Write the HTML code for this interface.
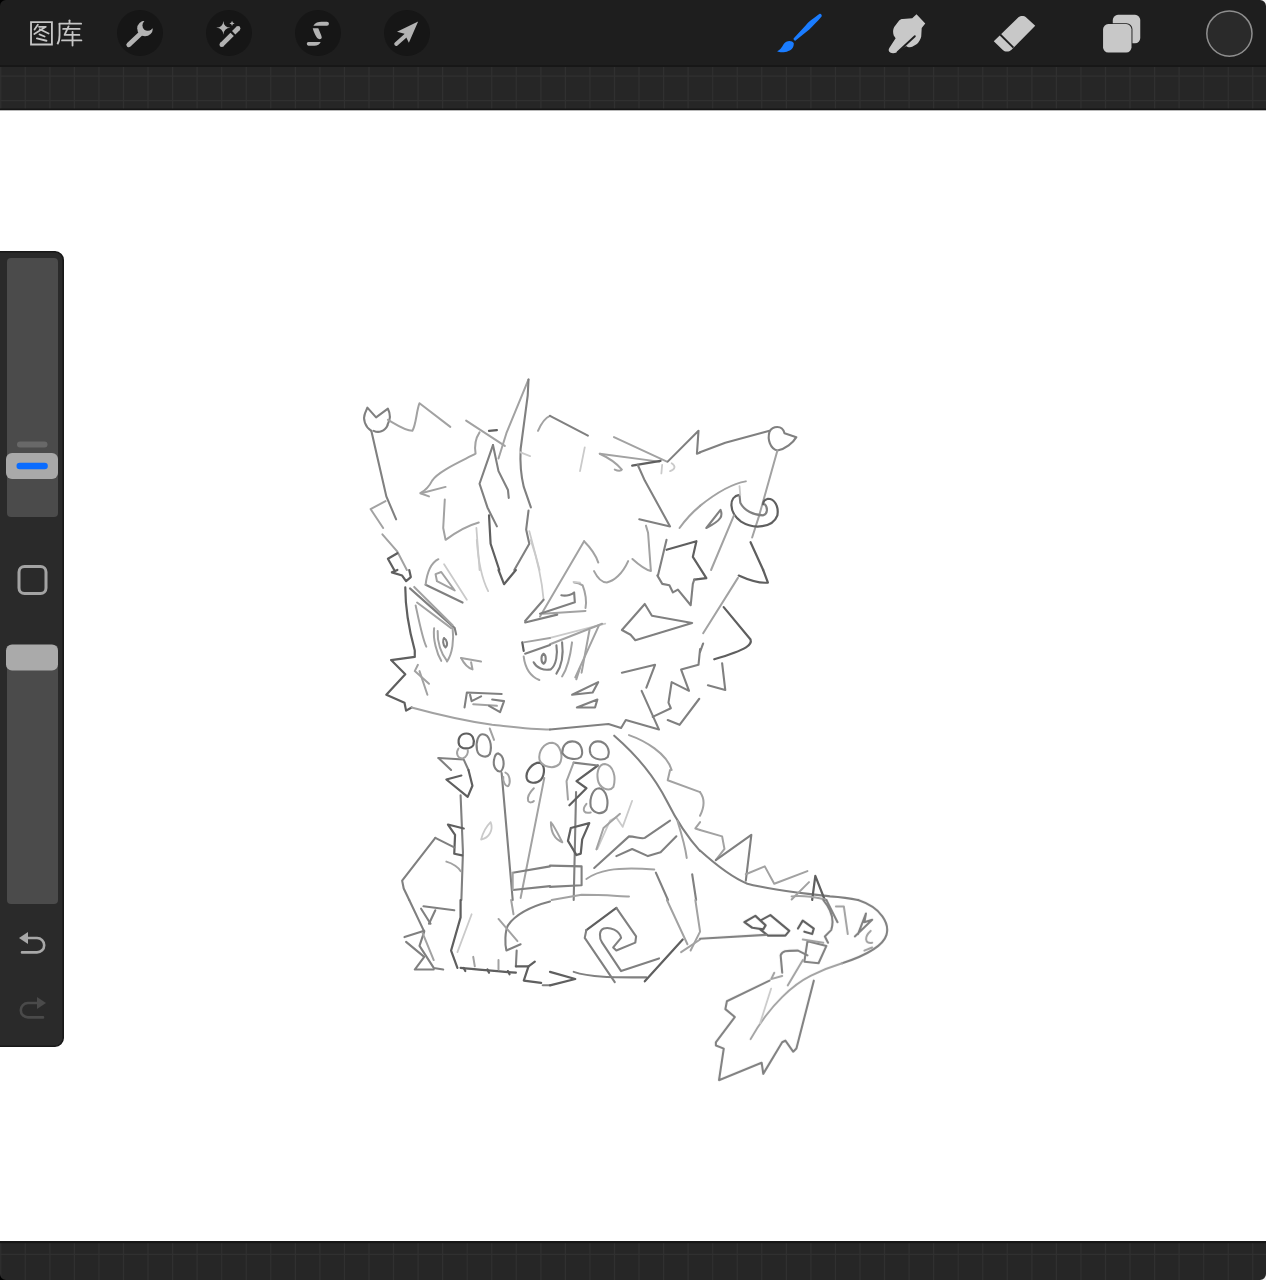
<!DOCTYPE html>
<html><head><meta charset="utf-8"><title>Procreate</title>
<style>
html,body{margin:0;padding:0;width:1266px;height:1280px;overflow:hidden;background:#ffffff;font-family:"Liberation Sans",sans-serif;}
svg{position:absolute;left:0;top:0;display:block;}
</style></head><body>
<svg width="1266" height="1280" viewBox="0 0 1266 1280">
<rect width="1266" height="1280" fill="#ffffff"/>
<filter id="soft" x="-5%" y="-5%" width="110%" height="110%"><feGaussianBlur stdDeviation="0.7"/></filter>
<g fill="none" stroke-linecap="round" stroke-linejoin="round" filter="url(#soft)">
<g transform="translate(350,370) scale(0.157978)">
<path d="M135,385 C95,360 80,310 95,275 L110,238 L165,300 L240,245 C258,280 252,320 238,345" stroke="#808080" stroke-width="2.1" vector-effect="non-scaling-stroke"/>
<path d="M150,385 C180,400 220,390 238,350" stroke="#808080" stroke-width="2.1" vector-effect="non-scaling-stroke"/>
<path d="M135,385 L175,560 L230,800 L292,945" stroke="#808080" stroke-width="2.1" vector-effect="non-scaling-stroke"/>
<path d="M240,315 C300,350 350,385 395,385 C420,340 420,260 440,210 L635,360" stroke="#a2a2a2" stroke-width="2.0" vector-effect="non-scaling-stroke"/>
<path d="M735,320 L980,480" stroke="#a2a2a2" stroke-width="2.0" vector-effect="non-scaling-stroke"/>
<path d="M880,385 L930,380" stroke="#5e5e5e" stroke-width="2.2" vector-effect="non-scaling-stroke"/>
<path d="M820,395 C790,440 790,500 795,530 C700,580 560,640 520,700 C500,740 480,760 445,780 L500,800" stroke="#a2a2a2" stroke-width="2.0" vector-effect="non-scaling-stroke"/>
<path d="M450,780 L605,740" stroke="#a2a2a2" stroke-width="2.0" vector-effect="non-scaling-stroke"/>
<path d="M1130,60 L990,400 L940,560" stroke="#a2a2a2" stroke-width="2.0" vector-effect="non-scaling-stroke"/>
<path d="M1130,60 L1125,160 L1080,500 C1075,600 1090,700 1100,740 L1145,870" stroke="#808080" stroke-width="2.1" vector-effect="non-scaling-stroke"/>
<path d="M1190,385 C1210,340 1240,300 1266,290" stroke="#a2a2a2" stroke-width="2.0" vector-effect="non-scaling-stroke"/>
<path d="M905,475 L820,720 L870,870 L930,990" stroke="#808080" stroke-width="2.1" vector-effect="non-scaling-stroke"/>
<path d="M905,475 L940,640 L1000,760 L1005,810" stroke="#808080" stroke-width="2.1" vector-effect="non-scaling-stroke"/>
<path d="M880,920 L890,1100 L945,1266" stroke="#5e5e5e" stroke-width="2.2" vector-effect="non-scaling-stroke"/>
<path d="M1130,890 L1115,1010 L1135,1100 L1040,1266" stroke="#808080" stroke-width="2.1" vector-effect="non-scaling-stroke"/>
<path d="M1075,520 L1140,545" stroke="#cacaca" stroke-width="1.8" vector-effect="non-scaling-stroke"/>
<path d="M600,820 L590,1000 L605,1075 C680,1020 760,980 815,965" stroke="#a2a2a2" stroke-width="2.0" vector-effect="non-scaling-stroke"/>
<path d="M800,1000 L820,1266" stroke="#cacaca" stroke-width="1.8" vector-effect="non-scaling-stroke"/>
<path d="M225,830 L130,880 L210,1000" stroke="#a2a2a2" stroke-width="2.0" vector-effect="non-scaling-stroke"/>
<path d="M205,1040 L300,1150 L360,1266" stroke="#a2a2a2" stroke-width="2.0" vector-effect="non-scaling-stroke"/>
<path d="M300,1160 L240,1195 L280,1266" stroke="#5e5e5e" stroke-width="2.2" vector-effect="non-scaling-stroke"/>
<path d="M1135,1020 L1200,1266" stroke="#cacaca" stroke-width="1.8" vector-effect="non-scaling-stroke"/>
</g>
<g transform="translate(550,370) scale(0.157978)">
<path d="M0,290 L240,415" stroke="#808080" stroke-width="2.1" vector-effect="non-scaling-stroke"/>
<path d="M405,425 L740,580" stroke="#a2a2a2" stroke-width="2.0" vector-effect="non-scaling-stroke"/>
<path d="M315,530 C380,560 430,600 455,630 C450,640 430,640 410,630" stroke="#a2a2a2" stroke-width="2.0" vector-effect="non-scaling-stroke"/>
<path d="M315,530 L690,580" stroke="#a2a2a2" stroke-width="2.0" vector-effect="non-scaling-stroke"/>
<path d="M520,605 L700,575" stroke="#5e5e5e" stroke-width="2.2" vector-effect="non-scaling-stroke"/>
<path d="M555,600 L600,700 L760,990 L565,945" stroke="#808080" stroke-width="2.1" vector-effect="non-scaling-stroke"/>
<path d="M745,580 L940,385 L930,530 L950,522" stroke="#808080" stroke-width="2.1" vector-effect="non-scaling-stroke"/>
<path d="M710,600 L705,655" stroke="#cacaca" stroke-width="1.8" vector-effect="non-scaling-stroke"/>
<path d="M770,590 C800,610 790,630 760,640" stroke="#cacaca" stroke-width="1.8" vector-effect="non-scaling-stroke"/>
<path d="M220,490 L190,640" stroke="#cacaca" stroke-width="1.8" vector-effect="non-scaling-stroke"/>
<path d="M820,1000 C870,930 920,885 950,860" stroke="#a2a2a2" stroke-width="2.0" vector-effect="non-scaling-stroke"/>
</g>
<g transform="translate(700,370) scale(0.157978)">
<path d="M0,520 L160,460 L440,385" stroke="#808080" stroke-width="2.1" vector-effect="non-scaling-stroke"/>
<path d="M440,390 C460,355 520,345 535,400 L610,425 C590,460 540,500 490,510 C445,500 425,440 440,390" stroke="#808080" stroke-width="2.1" vector-effect="non-scaling-stroke"/>
<path d="M490,510 L375,920 L330,1060" stroke="#a2a2a2" stroke-width="2.0" vector-effect="non-scaling-stroke"/>
<path d="M250,790 C180,800 180,900 260,960 C340,1010 460,1000 490,920 C500,860 470,815 430,815 C410,820 400,835 400,850" stroke="#5e5e5e" stroke-width="2.2" vector-effect="non-scaling-stroke"/>
<path d="M250,790 L255,840 C280,890 340,920 400,920 C430,910 430,870 410,850" stroke="#808080" stroke-width="2.1" vector-effect="non-scaling-stroke"/>
<path d="M290,705 C200,720 100,780 0,860" stroke="#a2a2a2" stroke-width="2.0" vector-effect="non-scaling-stroke"/>
<path d="M40,1000 L130,885 C145,920 140,950 40,1000" stroke="#808080" stroke-width="2.1" vector-effect="non-scaling-stroke"/>
<path d="M215,920 L70,1266" stroke="#a2a2a2" stroke-width="2.0" vector-effect="non-scaling-stroke"/>
<path d="M320,1090 L400,1266" stroke="#5e5e5e" stroke-width="2.2" vector-effect="non-scaling-stroke"/>
<path d="M250,735 L255,790" stroke="#cacaca" stroke-width="1.8" vector-effect="non-scaling-stroke"/>
</g>
<g transform="translate(350,570) scale(0.157978)">
<path d="M300,0 L265,15 L330,35 L355,70 L385,45 L375,0" stroke="#5e5e5e" stroke-width="2.2" vector-effect="non-scaling-stroke"/>
<path d="M350,110 C350,250 380,400 410,510 L410,550 L260,570 L350,660 L230,790 L345,840 L355,890 L390,870" stroke="#5e5e5e" stroke-width="2.2" vector-effect="non-scaling-stroke"/>
<path d="M390,870 C500,900 700,950 900,980 C1000,990 1150,1010 1266,1010" stroke="#a2a2a2" stroke-width="2.0" vector-effect="non-scaling-stroke"/>
<path d="M940,0 L975,90 L1050,0" stroke="#5e5e5e" stroke-width="2.2" vector-effect="non-scaling-stroke"/>
<path d="M960,785 L740,775 L725,870" stroke="#808080" stroke-width="2.1" vector-effect="non-scaling-stroke"/>
<path d="M760,790 L770,830 L830,800" stroke="#808080" stroke-width="2.1" vector-effect="non-scaling-stroke"/>
<path d="M780,850 L930,860" stroke="#a2a2a2" stroke-width="2.0" vector-effect="non-scaling-stroke"/>
<path d="M900,820 L975,830 L950,900 L880,860" stroke="#808080" stroke-width="2.1" vector-effect="non-scaling-stroke"/>
<path d="M560,1190 L720,1200 L750,1266" stroke="#808080" stroke-width="2.1" vector-effect="non-scaling-stroke"/>
<path d="M560,1190 L640,1266" stroke="#808080" stroke-width="2.1" vector-effect="non-scaling-stroke"/>
<path d="M430,600 L410,640 L500,720" stroke="#a2a2a2" stroke-width="2.0" vector-effect="non-scaling-stroke"/>
<path d="M440,640 L490,790" stroke="#a2a2a2" stroke-width="2.0" vector-effect="non-scaling-stroke"/>
</g>
<g transform="translate(550,570) scale(0.157978)">
<path d="M0,430 L350,340" stroke="#cacaca" stroke-width="1.8" vector-effect="non-scaling-stroke"/>
<path d="M0,470 L330,340" stroke="#a2a2a2" stroke-width="2.0" vector-effect="non-scaling-stroke"/>
<path d="M310,350 L160,680" stroke="#a2a2a2" stroke-width="2.0" vector-effect="non-scaling-stroke"/>
<path d="M250,380 L200,650" stroke="#a2a2a2" stroke-width="2.0" vector-effect="non-scaling-stroke"/>
<path d="M455,380 L600,215 L645,290 L900,335 L540,445 L510,410 Z" stroke="#808080" stroke-width="2.1" vector-effect="non-scaling-stroke"/>
<path d="M950,500 L940,600 L830,630 L880,765 L770,710 L750,840 L765,875 L650,930" stroke="#808080" stroke-width="2.1" vector-effect="non-scaling-stroke"/>
<path d="M580,765 L690,1010 L480,950 L450,1000 L370,975 C200,990 100,1000 0,1010" stroke="#808080" stroke-width="2.1" vector-effect="non-scaling-stroke"/>
<path d="M455,650 L665,600 L610,745" stroke="#808080" stroke-width="2.1" vector-effect="non-scaling-stroke"/>
<path d="M945,815 L820,980 L745,950" stroke="#808080" stroke-width="2.1" vector-effect="non-scaling-stroke"/>
<path d="M140,790 L305,710 L270,775 Z" stroke="#808080" stroke-width="2.1" vector-effect="non-scaling-stroke"/>
<path d="M170,870 L300,820 L285,870 Z" stroke="#808080" stroke-width="2.1" vector-effect="non-scaling-stroke"/>
<path d="M500,1045 C600,1080 740,1160 770,1266" stroke="#a2a2a2" stroke-width="2.0" vector-effect="non-scaling-stroke"/>
</g>
<g transform="translate(700,570) scale(0.157978)">
<path d="M245,35 C300,60 380,85 430,80 L400,0" stroke="#5e5e5e" stroke-width="2.2" vector-effect="non-scaling-stroke"/>
<path d="M240,50 L20,400" stroke="#a2a2a2" stroke-width="2.0" vector-effect="non-scaling-stroke"/>
<path d="M150,235 L320,440 C330,470 310,500 90,565" stroke="#5e5e5e" stroke-width="2.2" vector-effect="non-scaling-stroke"/>
<path d="M140,590 L160,760 L50,730" stroke="#808080" stroke-width="2.1" vector-effect="non-scaling-stroke"/>
<path d="M20,465 L0,520" stroke="#808080" stroke-width="2.1" vector-effect="non-scaling-stroke"/>
</g>
<g transform="translate(350,770) scale(0.157978)">
<path d="M705,35 L610,60 L745,170 L775,100 L750,0" stroke="#5e5e5e" stroke-width="2.2" vector-effect="non-scaling-stroke"/>
<path d="M700,160 L715,520 L705,823" stroke="#808080" stroke-width="2.1" vector-effect="non-scaling-stroke"/>
<path d="M720,370 L620,345 L665,410 L660,530 L710,540" stroke="#5e5e5e" stroke-width="2.2" vector-effect="non-scaling-stroke"/>
<path d="M540,430 L660,490" stroke="#808080" stroke-width="2.1" vector-effect="non-scaling-stroke"/>
<path d="M540,430 L330,700 L340,750 L375,823" stroke="#808080" stroke-width="2.1" vector-effect="non-scaling-stroke"/>
<path d="M610,580 C650,590 690,620 700,640" stroke="#a2a2a2" stroke-width="2.0" vector-effect="non-scaling-stroke"/>
<path d="M960,20 L1030,823" stroke="#808080" stroke-width="2.1" vector-effect="non-scaling-stroke"/>
<path d="M1230,50 L1080,810" stroke="#a2a2a2" stroke-width="2.0" vector-effect="non-scaling-stroke"/>
<path d="M1030,650 L1266,610" stroke="#808080" stroke-width="2.1" vector-effect="non-scaling-stroke"/>
<path d="M1030,760 L1266,735" stroke="#808080" stroke-width="2.1" vector-effect="non-scaling-stroke"/>
<path d="M1030,650 L1030,760" stroke="#a2a2a2" stroke-width="2.0" vector-effect="non-scaling-stroke"/>
<path d="M890,330 C910,380 880,430 830,440 C840,400 860,360 890,330" stroke="#cacaca" stroke-width="1.8" vector-effect="non-scaling-stroke"/>
</g>
<g transform="translate(550,770) scale(0.157978)">
<path d="M165,140 L150,823" stroke="#808080" stroke-width="2.1" vector-effect="non-scaling-stroke"/>
<path d="M0,605 L200,610 L200,730 L0,740" stroke="#808080" stroke-width="2.1" vector-effect="non-scaling-stroke"/>
<path d="M10,823 L200,790 C350,790 450,800 500,800" stroke="#a2a2a2" stroke-width="2.0" vector-effect="non-scaling-stroke"/>
<path d="M520,195 L460,360 L420,300 L380,320 L300,500" stroke="#cacaca" stroke-width="1.8" vector-effect="non-scaling-stroke"/>
<path d="M280,620 L500,420 C540,420 580,440 600,430 L760,320" stroke="#808080" stroke-width="2.1" vector-effect="non-scaling-stroke"/>
<path d="M420,545 L520,500 L620,545 L700,520 L800,420" stroke="#808080" stroke-width="2.1" vector-effect="non-scaling-stroke"/>
<path d="M230,690 C300,640 400,610 660,630" stroke="#a2a2a2" stroke-width="2.0" vector-effect="non-scaling-stroke"/>
<path d="M760,0 L745,65 L950,140" stroke="#a2a2a2" stroke-width="2.0" vector-effect="non-scaling-stroke"/>
<path d="M950,330 L920,370 L950,380" stroke="#a2a2a2" stroke-width="2.0" vector-effect="non-scaling-stroke"/>
<path d="M670,650 L747,823" stroke="#808080" stroke-width="2.1" vector-effect="non-scaling-stroke"/>
<path d="M900,660 L925,823" stroke="#808080" stroke-width="2.1" vector-effect="non-scaling-stroke"/>
</g>
<g transform="translate(700,770) scale(0.157978)">
<path d="M0,140 C30,180 30,230 0,290" stroke="#a2a2a2" stroke-width="2.0" vector-effect="non-scaling-stroke"/>
<path d="M0,380 L140,420 L155,500 L100,570" stroke="#a2a2a2" stroke-width="2.0" vector-effect="non-scaling-stroke"/>
<path d="M100,570 L325,410 L290,700" stroke="#808080" stroke-width="2.1" vector-effect="non-scaling-stroke"/>
<path d="M0,510 C100,600 200,680 300,720 C450,760 650,780 823,800 C900,805 950,812 1000,823" stroke="#808080" stroke-width="2.1" vector-effect="non-scaling-stroke"/>
<path d="M290,660 L410,610 L470,720 L680,640" stroke="#a2a2a2" stroke-width="2.0" vector-effect="non-scaling-stroke"/>
<path d="M580,820 L690,710" stroke="#a2a2a2" stroke-width="2.0" vector-effect="non-scaling-stroke"/>
<path d="M710,823 L730,670 L790,823" stroke="#5e5e5e" stroke-width="2.2" vector-effect="non-scaling-stroke"/>
<path d="M580,800 C650,790 760,810 800,823" stroke="#a2a2a2" stroke-width="2.0" vector-effect="non-scaling-stroke"/>
</g>
<g transform="translate(350,900) scale(0.157978)">
<path d="M375,0 L470,200 L440,290 L530,430 L590,440" stroke="#808080" stroke-width="2.1" vector-effect="non-scaling-stroke"/>
<path d="M1020,0 L1035,90" stroke="#a2a2a2" stroke-width="2.0" vector-effect="non-scaling-stroke"/>
<path d="M345,235 L470,195" stroke="#808080" stroke-width="2.1" vector-effect="non-scaling-stroke"/>
<path d="M355,265 L470,360 L410,440 L530,440" stroke="#808080" stroke-width="2.1" vector-effect="non-scaling-stroke"/>
<path d="M465,40 L660,65" stroke="#808080" stroke-width="2.1" vector-effect="non-scaling-stroke"/>
<path d="M540,65 L500,150" stroke="#808080" stroke-width="2.1" vector-effect="non-scaling-stroke"/>
<path d="M450,55 L510,150" stroke="#808080" stroke-width="2.1" vector-effect="non-scaling-stroke"/>
<path d="M460,210 L530,380" stroke="#a2a2a2" stroke-width="2.0" vector-effect="non-scaling-stroke"/>
<path d="M700,0 L700,110 L640,320 L680,430" stroke="#5e5e5e" stroke-width="2.2" vector-effect="non-scaling-stroke"/>
<path d="M700,430 C800,440 950,450 1050,460" stroke="#5e5e5e" stroke-width="2.2" vector-effect="non-scaling-stroke"/>
<path d="M730,450 L720,430 M880,460 L870,440 M1010,470 L1000,450" stroke="#5e5e5e" stroke-width="2.2" vector-effect="non-scaling-stroke"/>
<path d="M780,360 L790,420 M940,380 L940,440" stroke="#a2a2a2" stroke-width="2.0" vector-effect="non-scaling-stroke"/>
<path d="M770,90 L680,330" stroke="#cacaca" stroke-width="1.8" vector-effect="non-scaling-stroke"/>
<path d="M1266,10 C1150,40 1050,90 1000,160 C980,200 980,280 990,320 L1080,280" stroke="#808080" stroke-width="2.1" vector-effect="non-scaling-stroke"/>
<path d="M1055,320 L1050,420" stroke="#808080" stroke-width="2.1" vector-effect="non-scaling-stroke"/>
<path d="M940,120 L1060,260" stroke="#a2a2a2" stroke-width="2.0" vector-effect="non-scaling-stroke"/>
<path d="M1050,420 L1130,420 L1100,510 L1210,525" stroke="#5e5e5e" stroke-width="2.2" vector-effect="non-scaling-stroke"/>
<path d="M1130,420 L1170,390" stroke="#5e5e5e" stroke-width="2.2" vector-effect="non-scaling-stroke"/>
<path d="M1220,540 L1266,540" stroke="#808080" stroke-width="2.1" vector-effect="non-scaling-stroke"/>
</g>
<g transform="translate(550,900) scale(0.157978)">
<path d="M420,50 L230,190" stroke="#5e5e5e" stroke-width="2.2" vector-effect="non-scaling-stroke"/>
<path d="M230,190 L220,240 L410,520" stroke="#808080" stroke-width="2.1" vector-effect="non-scaling-stroke"/>
<path d="M420,50 L545,230 L540,270 L420,320 L400,300 L450,240 C440,190 380,170 340,180 C310,190 310,240 330,270 L450,450 L690,370" stroke="#808080" stroke-width="2.1" vector-effect="non-scaling-stroke"/>
<path d="M150,455 C250,490 400,490 610,490" stroke="#808080" stroke-width="2.1" vector-effect="non-scaling-stroke"/>
<path d="M0,455 L160,500 L0,540" stroke="#5e5e5e" stroke-width="2.2" vector-effect="non-scaling-stroke"/>
<path d="M740,0 L870,280" stroke="#a2a2a2" stroke-width="2.0" vector-effect="non-scaling-stroke"/>
<path d="M920,0 L950,200 L890,320" stroke="#a2a2a2" stroke-width="2.0" vector-effect="non-scaling-stroke"/>
<path d="M600,515 L840,250" stroke="#5e5e5e" stroke-width="2.2" vector-effect="non-scaling-stroke"/>
<path d="M830,330 L950,250" stroke="#a2a2a2" stroke-width="2.0" vector-effect="non-scaling-stroke"/>
</g>
<g transform="translate(700,900) scale(0.157978)">
<path d="M1000,0 C1150,50 1200,150 1180,220 C1160,290 1050,350 900,400" stroke="#808080" stroke-width="2.1" vector-effect="non-scaling-stroke"/>
<path d="M900,400 C800,430 750,455 700,480 C600,530 450,650 320,880" stroke="#a2a2a2" stroke-width="2.0" vector-effect="non-scaling-stroke"/>
<path d="M440,510 L170,640 L160,690 L220,740 L100,900 L100,920 L150,940 L120,1140 L390,1030 L400,1100 L520,900 L540,890 L590,960 L610,940 L720,510" stroke="#808080" stroke-width="2.1" vector-effect="non-scaling-stroke"/>
<path d="M520,460 L510,350 C520,320 540,320 620,320 L680,350" stroke="#808080" stroke-width="2.1" vector-effect="non-scaling-stroke"/>
<path d="M680,260 L800,290 L750,400 L660,390 Z" stroke="#808080" stroke-width="2.1" vector-effect="non-scaling-stroke"/>
<path d="M555,540 L650,380" stroke="#a2a2a2" stroke-width="2.0" vector-effect="non-scaling-stroke"/>
<path d="M470,460 L450,500 L520,480" stroke="#a2a2a2" stroke-width="2.0" vector-effect="non-scaling-stroke"/>
<path d="M380,780 L450,560" stroke="#cacaca" stroke-width="1.8" vector-effect="non-scaling-stroke"/>
<path d="M780,0 C830,60 850,130 830,190 L790,230 L810,270" stroke="#808080" stroke-width="2.1" vector-effect="non-scaling-stroke"/>
<path d="M860,40 L910,40 L935,215" stroke="#a2a2a2" stroke-width="2.0" vector-effect="non-scaling-stroke"/>
<path d="M1000,215 L1050,85 L1040,140 L1090,125 L980,230" stroke="#808080" stroke-width="2.1" vector-effect="non-scaling-stroke"/>
<path d="M1080,195 C1040,230 1040,280 1090,270" stroke="#a2a2a2" stroke-width="2.0" vector-effect="non-scaling-stroke"/>
<path d="M1040,320 L1090,300" stroke="#a2a2a2" stroke-width="2.0" vector-effect="non-scaling-stroke"/>
<path d="M280,140 L350,100 L415,160 L400,185 L330,175 Z" stroke="#5e5e5e" stroke-width="2.2" vector-effect="non-scaling-stroke"/>
<path d="M390,125 L445,95 L565,195 L540,225 L430,225 L380,185" stroke="#5e5e5e" stroke-width="2.2" vector-effect="non-scaling-stroke"/>
<path d="M620,180 L650,130 L720,180 L710,215 L660,200" stroke="#5e5e5e" stroke-width="2.2" vector-effect="non-scaling-stroke"/>
<path d="M0,245 L420,220" stroke="#808080" stroke-width="2.1" vector-effect="non-scaling-stroke"/>
<path d="M650,250 L780,270" stroke="#a2a2a2" stroke-width="2.0" vector-effect="non-scaling-stroke"/>
<path d="M800,0 L870,140" stroke="#808080" stroke-width="2.1" vector-effect="non-scaling-stroke"/>
</g>
<g transform="translate(540,500) scale(0.142180)">
<path d="M0,820 L310,290" stroke="#a2a2a2" stroke-width="2.0" vector-effect="non-scaling-stroke"/>
<path d="M310,290 C350,330 390,380 410,440" stroke="#a2a2a2" stroke-width="2.0" vector-effect="non-scaling-stroke"/>
<path d="M380,500 C410,560 440,580 470,580 C520,570 580,520 620,430" stroke="#a2a2a2" stroke-width="2.0" vector-effect="non-scaling-stroke"/>
<path d="M650,415 C700,460 740,490 780,500 L760,230 L745,180" stroke="#a2a2a2" stroke-width="2.0" vector-effect="non-scaling-stroke"/>
<path d="M830,530 L890,280" stroke="#808080" stroke-width="2.1" vector-effect="non-scaling-stroke"/>
<path d="M890,350 L1100,290 L1075,400 L1170,550 L1085,560" stroke="#5e5e5e" stroke-width="2.2" vector-effect="non-scaling-stroke"/>
<path d="M1085,560 L1075,590 L1060,740 L970,630 L935,650 L910,600 L860,590 L825,530" stroke="#808080" stroke-width="2.1" vector-effect="non-scaling-stroke"/>
<path d="M20,800 L320,780" stroke="#a2a2a2" stroke-width="2.0" vector-effect="non-scaling-stroke"/>
<path d="M150,670 C190,680 230,660 240,650 L245,720 L0,800" stroke="#808080" stroke-width="2.1" vector-effect="non-scaling-stroke"/>
<path d="M240,580 C270,580 300,600 300,600 C320,650 330,720 320,760" stroke="#a2a2a2" stroke-width="2.0" vector-effect="non-scaling-stroke"/>
</g>
<g transform="translate(400,540) scale(0.142180)">
<path d="M180,315 L440,440" stroke="#808080" stroke-width="2.1" vector-effect="non-scaling-stroke"/>
<path d="M180,315 C190,230 220,160 270,135" stroke="#a2a2a2" stroke-width="2.0" vector-effect="non-scaling-stroke"/>
<path d="M250,240 L290,225 L385,355 L260,290 Z" stroke="#a2a2a2" stroke-width="2.0" vector-effect="non-scaling-stroke"/>
<path d="M310,170 L470,420" stroke="#cacaca" stroke-width="1.8" vector-effect="non-scaling-stroke"/>
<path d="M70,340 L385,620 L395,665" stroke="#808080" stroke-width="2.1" vector-effect="non-scaling-stroke"/>
<path d="M100,330 L370,600" stroke="#a2a2a2" stroke-width="2.0" vector-effect="non-scaling-stroke"/>
<path d="M120,440 L360,620" stroke="#a2a2a2" stroke-width="2.0" vector-effect="non-scaling-stroke"/>
<path d="M110,460 C140,600 160,700 185,750" stroke="#a2a2a2" stroke-width="2.0" vector-effect="non-scaling-stroke"/>
<path d="M240,620 C230,700 260,800 290,850" stroke="#a2a2a2" stroke-width="2.0" vector-effect="non-scaling-stroke"/>
<path d="M265,640 C260,720 290,800 330,850" stroke="#a2a2a2" stroke-width="2.0" vector-effect="non-scaling-stroke"/>
<path d="M310,690 C330,700 340,740 320,755 C300,740 300,700 310,690" stroke="#808080" stroke-width="2.1" vector-effect="non-scaling-stroke"/>
<path d="M370,620 C380,700 370,800 330,855" stroke="#a2a2a2" stroke-width="2.0" vector-effect="non-scaling-stroke"/>
<path d="M430,830 L570,855" stroke="#a2a2a2" stroke-width="2.0" vector-effect="non-scaling-stroke"/>
<path d="M430,830 C450,870 480,900 510,910 L500,860" stroke="#a2a2a2" stroke-width="2.0" vector-effect="non-scaling-stroke"/>
<path d="M540,0 C550,150 580,280 620,360" stroke="#cacaca" stroke-width="1.8" vector-effect="non-scaling-stroke"/>
<path d="M920,0 C970,150 1000,300 1010,420" stroke="#cacaca" stroke-width="1.8" vector-effect="non-scaling-stroke"/>
<path d="M880,570 L1010,420" stroke="#808080" stroke-width="2.1" vector-effect="non-scaling-stroke"/>
<path d="M880,580 L1106,525" stroke="#808080" stroke-width="2.1" vector-effect="non-scaling-stroke"/>
<path d="M1220,295 L1266,300" stroke="#cacaca" stroke-width="1.8" vector-effect="non-scaling-stroke"/>
<path d="M860,720 L870,780" stroke="#5e5e5e" stroke-width="2.2" vector-effect="non-scaling-stroke"/>
<path d="M870,720 L1055,690" stroke="#a2a2a2" stroke-width="2.0" vector-effect="non-scaling-stroke"/>
<path d="M880,800 L1055,738" stroke="#808080" stroke-width="2.1" vector-effect="non-scaling-stroke"/>
<path d="M870,820 C880,900 920,960 980,985" stroke="#a2a2a2" stroke-width="2.0" vector-effect="non-scaling-stroke"/>
<path d="M940,860 C960,900 1010,920 1060,910 C1100,880 1110,800 1100,740" stroke="#808080" stroke-width="2.1" vector-effect="non-scaling-stroke"/>
<path d="M1010,800 C1030,810 1030,860 1010,870 C990,860 990,810 1010,800" stroke="#808080" stroke-width="2.1" vector-effect="non-scaling-stroke"/>
<path d="M1140,720 C1150,800 1140,880 1100,940" stroke="#808080" stroke-width="2.1" vector-effect="non-scaling-stroke"/>
<path d="M1210,720 C1200,800 1180,900 1140,960" stroke="#a2a2a2" stroke-width="2.0" vector-effect="non-scaling-stroke"/>
<path d="M1240,980 L1266,900" stroke="#a2a2a2" stroke-width="2.0" vector-effect="non-scaling-stroke"/>
</g>
<g transform="translate(440,720) scale(0.142180)">
<path d="M185,95 C230,95 245,140 235,175 C220,205 150,210 135,175 C120,130 145,95 185,95 Z" stroke="#5e5e5e" stroke-width="2.2" vector-effect="non-scaling-stroke"/>
<path d="M130,200 C110,230 120,270 160,270 C190,260 200,230 195,210" stroke="#a2a2a2" stroke-width="2.0" vector-effect="non-scaling-stroke"/>
<path d="M300,100 C350,100 370,180 350,240 C330,270 270,260 260,210 C250,150 270,100 300,100 Z" stroke="#808080" stroke-width="2.1" vector-effect="non-scaling-stroke"/>
<path d="M410,235 C450,250 460,320 430,360 C400,370 370,330 380,280 C385,250 395,235 410,235 Z" stroke="#808080" stroke-width="2.1" vector-effect="non-scaling-stroke"/>
<path d="M460,370 C490,380 500,440 480,465 C460,470 440,430 445,400" stroke="#a2a2a2" stroke-width="2.0" vector-effect="non-scaling-stroke"/>
<path d="M350,60 L380,140" stroke="#a2a2a2" stroke-width="2.0" vector-effect="non-scaling-stroke"/>
<path d="M700,300 C740,310 740,380 710,420 C680,450 620,450 610,410 C600,360 650,300 700,300 Z" stroke="#5e5e5e" stroke-width="2.2" vector-effect="non-scaling-stroke"/>
<path d="M660,480 C640,500 610,540 620,570 C630,585 650,580 660,570" stroke="#a2a2a2" stroke-width="2.0" vector-effect="non-scaling-stroke"/>
<path d="M790,160 C850,170 870,260 840,310 C800,350 720,330 700,280 C690,220 730,160 790,160 Z" stroke="#a2a2a2" stroke-width="2.0" vector-effect="non-scaling-stroke"/>
<path d="M930,150 C1000,150 1010,230 990,260 C950,290 880,270 860,230 C860,180 890,150 930,150 Z" stroke="#808080" stroke-width="2.1" vector-effect="non-scaling-stroke"/>
<path d="M1110,150 C1170,150 1200,210 1180,260 C1150,290 1080,280 1060,240 C1040,190 1070,150 1110,150 Z" stroke="#808080" stroke-width="2.1" vector-effect="non-scaling-stroke"/>
<path d="M1160,310 C1220,320 1240,400 1220,470 C1190,510 1120,480 1110,420 C1100,360 1120,310 1160,310 Z" stroke="#a2a2a2" stroke-width="2.0" vector-effect="non-scaling-stroke"/>
<path d="M1120,480 C1170,490 1190,570 1170,630 C1140,670 1080,660 1060,610 C1050,540 1080,480 1120,480 Z" stroke="#808080" stroke-width="2.1" vector-effect="non-scaling-stroke"/>
<path d="M1030,590 C990,640 1020,660 1060,650" stroke="#a2a2a2" stroke-width="2.0" vector-effect="non-scaling-stroke"/>
<path d="M1110,320 L960,430 L1030,480 L910,600" stroke="#5e5e5e" stroke-width="2.2" vector-effect="non-scaling-stroke"/>
<path d="M940,300 L1110,320" stroke="#808080" stroke-width="2.1" vector-effect="non-scaling-stroke"/>
<path d="M940,300 L890,430 L900,560" stroke="#a2a2a2" stroke-width="2.0" vector-effect="non-scaling-stroke"/>
<path d="M920,760 L1050,725 L1000,840 L990,940 L960,950 L900,850 Z" stroke="#5e5e5e" stroke-width="2.2" vector-effect="non-scaling-stroke"/>
<path d="M780,720 C780,790 810,840 860,860 C830,800 800,740 780,720" stroke="#a2a2a2" stroke-width="2.0" vector-effect="non-scaling-stroke"/>
<path d="M1266,660 L1150,760 L1100,910" stroke="#a2a2a2" stroke-width="2.0" vector-effect="non-scaling-stroke"/>
</g>
<g transform="translate(600,730) scale(0.142180)">
<path d="M100,40 C250,170 380,320 470,500 C540,640 620,760 703,850" stroke="#808080" stroke-width="2.1" vector-effect="non-scaling-stroke"/>
<path d="M545,640 C570,720 600,820 610,900" stroke="#a2a2a2" stroke-width="2.0" vector-effect="non-scaling-stroke"/>
</g>
</g>
<rect x="0" y="0" width="1266" height="66" fill="#1e1e1e"/>
<rect x="0" y="66" width="1266" height="44" fill="#262626"/>
<path d="M0.75,66V110M25.30,66V110M49.85,66V110M74.40,66V110M98.95,66V110M123.50,66V110M148.05,66V110M172.60,66V110M197.15,66V110M221.70,66V110M246.25,66V110M270.80,66V110M295.35,66V110M319.90,66V110M344.45,66V110M369.00,66V110M393.55,66V110M418.10,66V110M442.65,66V110M467.20,66V110M491.75,66V110M516.30,66V110M540.85,66V110M565.40,66V110M589.95,66V110M614.50,66V110M639.05,66V110M663.60,66V110M688.15,66V110M712.70,66V110M737.25,66V110M761.80,66V110M786.35,66V110M810.90,66V110M835.45,66V110M860.00,66V110M884.55,66V110M909.10,66V110M933.65,66V110M958.20,66V110M982.75,66V110M1007.30,66V110M1031.85,66V110M1056.40,66V110M1080.95,66V110M1105.50,66V110M1130.05,66V110M1154.60,66V110M1179.15,66V110M1203.70,66V110M1228.25,66V110M1252.80,66V110M1277.35,66V110" stroke="#303030" stroke-width="1.3" fill="none"/>
<path d="M0,76.1H1266M0,100.7H1266" stroke="#303030" stroke-width="1.3"/>
<rect x="0" y="65" width="1266" height="2" fill="#171717"/>
<rect x="0" y="108.5" width="1266" height="1.8" fill="#151515"/>
<rect x="0" y="1241" width="1266" height="39" fill="#262626"/>
<path d="M0.75,1241V1280M25.30,1241V1280M49.85,1241V1280M74.40,1241V1280M98.95,1241V1280M123.50,1241V1280M148.05,1241V1280M172.60,1241V1280M197.15,1241V1280M221.70,1241V1280M246.25,1241V1280M270.80,1241V1280M295.35,1241V1280M319.90,1241V1280M344.45,1241V1280M369.00,1241V1280M393.55,1241V1280M418.10,1241V1280M442.65,1241V1280M467.20,1241V1280M491.75,1241V1280M516.30,1241V1280M540.85,1241V1280M565.40,1241V1280M589.95,1241V1280M614.50,1241V1280M639.05,1241V1280M663.60,1241V1280M688.15,1241V1280M712.70,1241V1280M737.25,1241V1280M761.80,1241V1280M786.35,1241V1280M810.90,1241V1280M835.45,1241V1280M860.00,1241V1280M884.55,1241V1280M909.10,1241V1280M933.65,1241V1280M958.20,1241V1280M982.75,1241V1280M1007.30,1241V1280M1031.85,1241V1280M1056.40,1241V1280M1080.95,1241V1280M1105.50,1241V1280M1130.05,1241V1280M1154.60,1241V1280M1179.15,1241V1280M1203.70,1241V1280M1228.25,1241V1280M1252.80,1241V1280M1277.35,1241V1280" stroke="#303030" stroke-width="1.3" fill="none"/>
<path d="M0,1254.4H1266" stroke="#303030" stroke-width="1.3"/>
<rect x="0" y="1241" width="1266" height="2.2" fill="#161616"/>
<path d="M0,0H6A6,6 0 0 0 0,6Z" fill="#000"/>
<path d="M1266,0H1260A6,6 0 0 1 1266,6Z" fill="#f0f0f0"/>
<path d="M0,1280H6A6,6 0 0 1 0,1274Z" fill="#000"/>
<path d="M1266,1280H1260A6,6 0 0 0 1266,1274Z" fill="#f0f0f0"/>
<g transform="translate(24,14) scale(0.05056)" fill="none" stroke="#c6c6c6" stroke-width="36" stroke-linecap="round" stroke-linejoin="round"><path d="M139,162H552V603H139Z" stroke-linecap="butt" stroke-linejoin="miter"/><path d="M274,214L209,306"/><path d="M297,253H431L204,394"/><path d="M311,302L487,385"/><path d="M306,404L408,445"/><path d="M255,482L445,529"/><path d="M900,125V185"/><path d="M700,192H1130"/><path d="M703,192V420C703,500 690,555 660,600" stroke-linecap="butt"/><path d="M775,295H1100"/><path d="M882,246L803,413H1095"/><path d="M960,352V625"/><path d="M752,522H1135"/></g>
<circle cx="140" cy="33" r="23" fill="#161616"/>
<circle cx="229" cy="33" r="23" fill="#161616"/>
<circle cx="318" cy="33" r="23" fill="#161616"/>
<circle cx="407" cy="33" r="23" fill="#161616"/>
<g transform="translate(115,8) scale(0.03949)" fill="#b3b3b3"><mask id="wm" maskUnits="userSpaceOnUse" x="0" y="0" width="1266" height="1266"><rect x="0" y="0" width="1266" height="1266" fill="#fff"/><circle cx="830" cy="440" r="135" fill="#000"/><path d="M830,440 L690,270 L1100,200 L1020,565Z" fill="#000"/></mask><path d="M350,930L640,660" stroke="#b3b3b3" stroke-width="125" stroke-linecap="round"/><circle cx="760" cy="520" r="198" mask="url(#wm)"/></g>
<g transform="translate(204,8) scale(0.03949)" fill="#b3b3b3"><path d="M490,330 Q500,490 670,500 Q500,510 490,680 Q480,510 310,500 Q480,490 490,330Z"/><path d="M710,325 Q714,386 775,390 Q714,394 710,455 Q706,394 645,390 Q706,386 710,325Z"/><path d="M452,928 L712,668" stroke="#b3b3b3" stroke-width="120"/><circle cx="452" cy="928" r="60"/><path d="M752,628 L862,518" stroke="#b3b3b3" stroke-width="120"/><circle cx="862" cy="518" r="60"/></g>
<g transform="translate(293,8) scale(0.03949)" fill="#b3b3b3"><path d="M520,445 C560,370 640,350 720,350 L860,350 A50,50 0 0 1 860,450 L520,450Z"/><path d="M500,510 L640,510 C680,600 720,690 728,740 C732,795 650,805 612,762 C560,680 520,600 500,510 Z"/><path d="M390,860 L700,860 C680,920 620,955 540,955 L390,955 A48,48 0 0 1 390,860Z"/></g>
<g transform="translate(382,8) scale(0.03949)" fill="#b3b3b3"><path d="M915,345 L380,600 L570,650 L680,880Z"/><path d="M360,910 L610,690" stroke="#b3b3b3" stroke-width="100" stroke-linecap="round"/></g>
<g transform="translate(770,8) scale(0.04739)" fill="#1a7cff"><path d="M1041,129 C1068,108 1105,150 1089,181 C1000,290 900,380 829,452 L540,688 C525,700 495,680 497,645 L751,368 C860,250 960,190 1041,129 Z"/><path d="M500,740 C470,680 340,680 290,760 C250,840 200,890 150,915 C240,960 430,930 480,840 C500,800 505,770 500,740Z"/></g>
<g transform="translate(880,8) scale(0.04739)"><path fill="#c8c8c8" d="M215,940 C175,920 175,870 200,840 L330,640 L290,580 C270,520 270,450 300,400 L400,270 C420,240 450,230 480,230 L680,215 L770,130 L955,325 L880,420 L870,600 C860,650 820,720 780,760 L680,820 C620,840 580,820 550,800 L350,940 C300,960 250,960 215,940 Z"/><path d="M735,595 L370,935" stroke="#1e1e1e" stroke-width="40" stroke-linecap="round"/></g>
<g transform="translate(985,8) scale(0.04739)"><path fill="#c8c8c8" d="M185,700 L690,210 C740,160 820,160 870,200 L1060,375 L560,880 C500,935 420,930 370,880 Z"/><path d="M320,560 L600,835" stroke="#1e1e1e" stroke-width="40"/></g>
<g transform="translate(1095,8) scale(0.04739)"><rect x="375" y="145" width="580" height="600" rx="110" fill="#c8c8c8"/><rect x="150" y="320" width="640" height="640" rx="125" fill="#1e1e1e"/><rect x="170" y="340" width="600" height="600" rx="110" fill="#c8c8c8"/></g>
<circle cx="1229.4" cy="33.6" r="22.6" fill="#2a2a2a" stroke="#8f8f8f" stroke-width="1.5"/>
<path d="M-2,251.8 H55 A8.2,8.2 0 0 1 63.2,260 V1038 A8.2,8.2 0 0 1 55,1046.2 H-2Z" fill="#2a2a2a" stroke="#181818" stroke-width="1.6"/>
<rect x="7" y="258" width="51" height="259" rx="4" fill="#4b4b4b"/>
<rect x="17" y="441.5" width="30.5" height="6" rx="3" fill="#686868"/>
<rect x="6" y="453" width="52" height="26" rx="6" fill="#a9a9a9"/>
<rect x="16.5" y="462.7" width="31.3" height="6.5" rx="3.2" fill="#0a6cff"/>
<rect x="19" y="566.5" width="27" height="27" rx="5.5" fill="none" stroke="#a3a3a3" stroke-width="3"/>
<rect x="7" y="645" width="51" height="259" rx="4" fill="#4b4b4b"/>
<rect x="6" y="644.5" width="52" height="26" rx="6" fill="#aaaaaa"/>
<g fill="none" stroke="#a8a8a8" stroke-width="2.6" stroke-linecap="round"><path d="M27,938 H37 A7.2,7.2 0 0 1 37,952.4 H22"/></g>
<path d="M19,938 L28,932 V944Z" fill="#a8a8a8"/>
<g fill="none" stroke="#4a4a4a" stroke-width="2.6" stroke-linecap="round"><path d="M38,1003 H28 A7.2,7.2 0 0 0 28,1017.4 H43"/></g>
<path d="M46,1003 L37,997 V1009Z" fill="#4a4a4a"/>
</svg>
</body></html>
